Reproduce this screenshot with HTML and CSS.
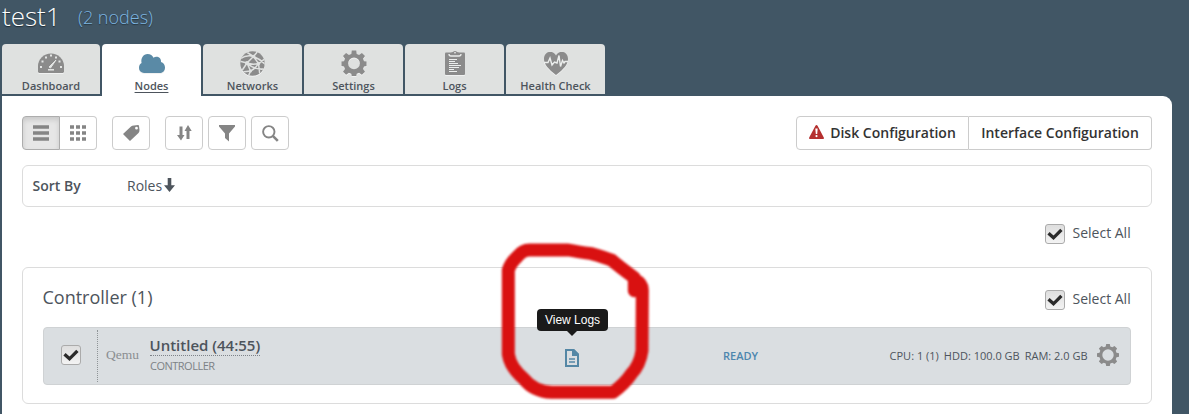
FILE: index.html
```html
<!DOCTYPE html>
<html lang="en">
<head>
<meta charset="utf-8">
<title>test1 - Nodes</title>
<link rel="stylesheet" href="styles.css">
</head>
<body>
<svg class="defs" width="0" height="0">
  <symbol id="gear" viewBox="0 0 26 26"><path fill-rule="evenodd" d="M10.8 0.5h4.4l.5 3.4 2.4 1 2.8-2 3.1 3.1-2 2.8 1 2.4 2.5.4v4.4l-2.5.5-1 2.4 2 2.8-3.1 3.1-2.8-2-2.4 1-.5 2.7h-4.4l-.5-2.7-2.4-1-2.8 2L2 21.7l2-2.8-1-2.4-2.5-.5v-4.4l2.5-.4 1-2.4L2 6l3.1-3.1 2.8 2 2.4-1zM13 7.400a5.900 5.900 0 1 0 0 11.800a5.900 5.900 0 1 0 0-11.800z"/></symbol>
  <symbol id="gear-thin" viewBox="0 0 22 22"><path fill-rule="evenodd" d="M9.2 0h3.6l.5 2.5 2 .8L17.5 1.900 20.100 4.500 18.700 6.700l.8 2 2.500.5v3.600l-2.500.5-.8 2 1.400 2.200-2.600 2.600-2.200-1.400-2 .8-.5 2.500H9.200l-.5-2.500-2-.8-2.200 1.400-2.600-2.600 1.400-2.200-.8-2L0 12.800V9.200l2.500-.5.8-2L1.900 4.500 4.500 1.900l2.200 1.400 2-.8zM11 5.300a5.700 5.700 0 1 0 0 11.400a5.700 5.700 0 1 0 0-11.400z"/></symbol>
  <symbol id="tick" viewBox="0 0 20 20"><path d="M3.500 9.200l5 4.600 7.900-8" fill="none" stroke="#2b2b2b" stroke-width="3.300"/></symbol>
</svg>

<header class="title"><h1>test1</h1><span class="count">(2 nodes)</span></header>

<nav class="tabs">
  <a class="tab first"><span class="tab-icon"><svg width="26" height="20" viewBox="0 0 26 20"><path d="M0 19V13a13 12.500 0 0 1 26 0v6l-1 1H1z" fill="#8b8b8b"/><path d="M2 14h2M22 14h2M3.500 8.500h2M20.500 8.500h2M7 4.500h2M12 2.600h2M17 4.500h2" stroke="#e4e6e5" stroke-width="2"/><path d="M18 7l-5.500 8-1.500-1z" fill="#e4e6e5" stroke="#e4e6e5"/><path d="M10 16.800h6" stroke="#e4e6e5" stroke-width="1.500"/></svg></span><span>Dashboard</span></a>
  <a class="tab active"><span class="tab-icon"><svg width="26" height="19" viewBox="0 0 26 19"><path d="M5 19a5 5 0 0 1-5-5c0-2.600 1-4.200 2.600-5C1.500 4 4.500 0 8.500 0c3 0 5 1.500 6 3.700 2.500-2 8-1 7.500 4.300C24.500 8.500 26 11 26 13.500c0 3-2 5.500-5 5.500z" fill="#5a8aa6"/></svg></span><span class="label">Nodes</span></a>
  <a class="tab"><span class="tab-icon"><svg width="25" height="25" viewBox="0 0 25 25"><defs><clipPath id="globe"><circle cx="12.500" cy="12.500" r="12.200"/></clipPath></defs><g clip-path="url(#globe)"><path d="M0 0h25v25H0z" fill="#8b8b8b"/><path d="M0 8Q7 3 13.500 5.500T26 14M13.500 5.500L18 0M5 0L13.500 5.500 7 12 10.500 20M-1 10L7 12Q13 14 18.500 12.500L26 7M7 12L1 21M13.500 5.500L18.500 12.500Q16 17 10.500 20L2 21M7 12Q14 19 24 18M10.500 20L8 26M18.500 12.500L20 25" fill="none" stroke="#dfe1e0" stroke-width="1.500"/><g fill="#dfe1e0"><circle cx="13.500" cy="5.500" r="1.800"/><circle cx="7" cy="12" r="2"/><circle cx="18.500" cy="12.500" r="1.800"/><circle cx="10.500" cy="20" r="1.500"/></g></g></svg></span><span>Networks</span></a>
  <a class="tab"><span class="tab-icon"><svg class="gray" width="26" height="26"><use href="#gear"/></svg></span><span>Settings</span></a>
  <a class="tab"><span class="tab-icon"><svg width="20" height="24" viewBox="0 0 20 24"><rect y="1.500" width="20" height="22.500" rx="1" fill="#8b8b8b"/><path d="M4 2.500L7 1.500Q10-1.500 13 1.500L16 2.500 15.500 5h-11z" fill="#8b8b8b"/><path d="M4 3q0 2 2 2h8q2 0 2-2" fill="none" stroke="#eceeed" stroke-width="1.300"/><circle cx="10" cy="1.800" r=".8" fill="#fff"/><path d="M4 8.500h8M4 10.500h6M4 12.500h9M4 14.500h12M4 16.500h10M4 18.500h5M4 20.500h8" stroke="#eceeed" stroke-width="1"/></svg></span><span>Logs</span></a>
  <a class="tab"><span class="tab-icon"><svg width="24" height="23" viewBox="0 0 24 23"><path d="M12 23C4 17 0 12 0 7c0-8 9-9.500 12-3.500C15-2.500 24-1 24 7c0 5-4 10-12 16z" fill="#8b8b8b"/><path d="M0 10.500h4L6 6l2 7 2.500-3 2.500 1 2-7.500 1.500 11 2-6 1.500 2.500 1-1.500h3" fill="none" stroke="#eceeed" stroke-width="1.400"/></svg></span><span>Health Check</span></a>
</nav>

<main class="panel">
  <div class="toolbar">
    <div class="group view">
      <button class="btn pressed"><svg width="16" height="16" viewBox="0 0 16 16"><path d="M0 2h16M0 8h16M0 14h16" stroke="#858585" stroke-width="3.400"/></svg></button>
      <button class="btn"><svg width="16" height="16" viewBox="0 0 16 16"><path d="M0 2h16M0 8h16M0 14h16" stroke="#858585" stroke-width="3.600" stroke-dasharray="4 2"/></svg></button>
    </div>
    <button class="btn tag"><svg width="17" height="16" viewBox="0 0 17 16"><path fill-rule="evenodd" d="M0 9L8 1.500Q9 .5 11 .500L15 0q1 0 1 1l.5 4q0 2-1 3L7 16zM13.500 1.800a1.400 1.400 0 1 0 0 2.800a1.400 1.400 0 1 0 0-2.800z" fill="#858585"/></svg></button>
    <button class="btn"><svg width="15" height="16" viewBox="0 0 15 16"><path d="M2.500 1.500h3V10H7.500L4 15.500 0 10h2.500zM9.500 14V6H7.500L11 0l3.700 6h-2.200v8z" fill="#858585"/></svg></button>
    <button class="btn"><svg width="16" height="17" viewBox="0 0 16 17"><path d="M0 0h16v1.500L10 8.500v8L6 13V8.500L0 1.500z" fill="#858585"/></svg></button>
    <button class="btn"><svg width="17" height="17" viewBox="0 0 17 17"><circle cx="6.800" cy="6.800" r="5.700" fill="none" stroke="#858585" stroke-width="1.900"/><path d="M10.800 10.800l5 5" stroke="#858585" stroke-width="2.600"/></svg></button>
    <div class="group config">
      <button class="btn disk"><svg width="15" height="14" viewBox="0 0 15 14"><path d="M7.500 0q.7 0 1.200 1l6.100 11.500q.5 1.500-.6 1.500H.8q-1.100 0-.6-1.500L6.300 1q.5-1 1.200-1z" fill="#b5302f"/><path d="M6.300 3.500h2.400L8.200 9H6.800z" fill="#fff"/><circle cx="7.500" cy="11.100" r="1.100" fill="#fff"/></svg>Disk Configuration</button>
      <button class="btn interface">Interface Configuration</button>
    </div>
  </div>

  <section class="sorting"><strong>Sort By</strong><span>Roles</span><svg width="11" height="14" viewBox="0 0 11 14"><path d="M3.700 0h3.600v7.200H11L5.500 14 0 7.200h3.700z" fill="#4d545c"/></svg></section>

  <div class="select-all global"><span class="check"><svg><use href="#tick"/></svg></span>Select All</div>

  <section class="nodes">
    <div class="nodes-head"><h2>Controller (1)</h2><div class="select-all"><span class="check"><svg><use href="#tick"/></svg></span>Select All</div></div>
    <div class="node">
      <div class="node-check"><span class="check"><svg><use href="#tick"/></svg></span></div>
      <span class="vendor">Qemu</span>
      <div class="node-name"><span class="name">Untitled (44:55)</span><span class="role">CONTROLLER</span></div>
      <div class="logs"><svg width="14" height="18" viewBox="0 0 14 18"><path d="M1 1h7.500L13 5.500V17H1z" fill="none" stroke="#5487a5" stroke-width="2"/><path d="M7 0h2l5 5v2H7z" fill="#5487a5"/><path d="M4 10h6M4 13h6" stroke="#5487a5" stroke-opacity=".75" stroke-width="1.800"/></svg><span class="tooltip">View Logs</span></div>
      <span class="status">READY</span>
      <span class="hardware"><span>CPU: 1 (1)</span><span>HDD: 100.0 GB</span><span>RAM: 2.0 GB</span></span>
      <svg class="gray node-gear" width="22" height="22"><use href="#gear-thin"/></svg>
    </div>
  </section>
</main>

<svg class="marker" viewBox="0 0 540 552"><path d="M433 182L433 148Q458 160 457 182L456 362Q450 405 423 433Q405 460 369 487H185Q130 484 102 447Q61 413 55 373V120Q62 98 83 79Q98 60 118 60H235Q260 65 305 71Q342 81 366 91Q384 107 433 143"/></svg>
</body>
</html>
```

FILE: styles.css
```css
* { box-sizing: border-box; }
body { margin: 0; height: 414px; overflow: hidden; background: #415665; color: #4d545c; font-family: "Open Sans", sans-serif; font-size: 14px; }
h1, h2 { margin: 0; font-weight: 400; }
svg { display: block; flex: none; }
.defs { position: absolute; }
.gray { fill: #8b8b8b; }

.title { height: 44px; padding-left: 2px; display: flex; align-items: flex-start; white-space: nowrap; }
.title h1 { width: 76px; font-size: 26px; line-height: 32px; font-weight: 300; color: #fff; text-shadow: 0 1px 1px #1d2a33; }
.count { font-size: 18px; line-height: 35px; font-weight: 300; color: #7db5e0; text-shadow: 0 1px 1px #26353f; }

.tabs { display: flex; gap: 2px; height: 52px; padding-left: 2px; }
.tab { width: 99px; height: 50px; border-radius: 4px 4px 0 0; background: #dfe1e0; text-align: center; font-size: 11px; font-weight: 600; line-height: 14px; }
.tab.first { width: 98px; }
.tab.active { height: 52px; background: #fff; }
.tab-icon { height: 35px; padding-top: 3px; display: flex; align-items: center; justify-content: center; }
.tab-icon svg { filter: drop-shadow(0 1px 0 #f0f1f1); }
.tab > span:last-child { display: block; }
.tab .label { text-decoration: underline; text-underline-offset: 2px; }

.panel { margin-left: 2px; width: 1170px; height: 318px; padding: 20px 20px 0; background: #fff; border-radius: 0 9px 0 0; }
.toolbar { display: flex; gap: 5px; height: 34px; }
.group { display: flex; }
.btn { width: 38px; height: 34px; padding: 0; display: flex; align-items: center; justify-content: center; background: #fff; border: 1px solid #ccc; border-radius: 4px; color: #333; font: 600 14px "Open Sans", sans-serif; white-space: nowrap; }
.view { margin-right: 10px; }
.pressed { background: #e6e6e6; border-color: #adadad; box-shadow: inset 0 3px 5px rgba(0,0,0,.125); }
.group .btn:first-child { border-radius: 4px 0 0 4px; }
.group .btn:last-child { border-left: 0; border-radius: 0 4px 4px 0; width: 37px; }
.tag { margin-right: 10px; }
.config { margin-left: auto; }
.config .btn { padding-bottom: 2px; }
.config .disk { width: 173px; gap: 6px; }
.config .btn.interface { width: 183px; }

.sorting { height: 42px; margin-top: 15px; padding: 0 0 2px 9.500px; border: 1px solid #dcdcdc; border-radius: 6px; display: flex; align-items: center; }
.sorting strong { width: 94.500px; font-weight: 600; }
.sorting svg { margin: 0 0 0 2px; }

.select-all { display: flex; width: 86px; gap: 7.500px; line-height: 20px; white-space: nowrap; }
.select-all .check { margin-top: 1px; }
.global { margin: 16px 21px 0 auto; }
.check { flex: none; width: 20px; height: 20px; border: 1px solid #ababab; border-radius: 3px; background: linear-gradient(#dedede, #f3f3f3); }
.check svg { width: 20px; height: 20px; margin: -1px; }

.nodes { margin-top: 23px; height: 137px; padding: 0 20px; border: 1px solid #dcdcdc; border-radius: 6px; }
.nodes-head { height: 59px; padding-top: 19px; display: flex; justify-content: space-between; }
.nodes-head h2 { margin-left: -.5px; font-size: 18px; line-height: 20px; }
.nodes-head .select-all { margin-top: 2px; }
.node { height: 58px; display: flex; align-items: center; border: 1px solid #cfd2d4; border-radius: 4px; background: #dadee1; white-space: nowrap; }
.node-check { width: 54px; height: 52px; padding: 0 0 2px 17px; display: flex; align-items: center; border-right: 1px dotted #8f9497; }
.vendor { width: 52px; padding: 0 0 3px 8px; font: 13.500px "Liberation Serif", serif; color: #8b8e91; }
.node-name { width: 371px; height: 50px; padding-top: 5px; display: flex; flex-direction: column; align-items: flex-start; }
.name { height: 20px; margin-left: -.5px; font-size: 15px; line-height: 18px; font-weight: 600; border-bottom: 1px dotted #7d8288; }
.role { margin-top: 3px; font-size: 11px; line-height: 14px; letter-spacing: -.5px; color: #7d8286; }
.logs { position: relative; width: 202px; padding: 4px 0 0 44px; }
.tooltip { position: absolute; left: 16px; bottom: 36px; width: 71px; height: 22px; border-radius: 4px; background: #1a1a1a; color: #fff; text-align: center; font: 12px/22px "Liberation Sans", sans-serif; }
.tooltip::after { content: ""; position: absolute; left: 30px; top: 22px; border: 5px solid transparent; border-top-color: #1a1a1a; border-bottom: 0; }
.status { padding-bottom: 2px; font-size: 11px; font-weight: 600; color: #4d86ae; }
.hardware { margin-left: auto; padding-bottom: 2px; display: flex; gap: 5px; font-size: 11px; }
.node-gear { margin: -2px 11px 0 9.500px; }
.marker { position: absolute; left: 490px; top: 230px; width: 180px; height: 184px; pointer-events: none; filter: blur(.8px); }
.marker path { fill: none; stroke: #d91111; stroke-width: 39; stroke-linecap: round; stroke-linejoin: round; }
```
